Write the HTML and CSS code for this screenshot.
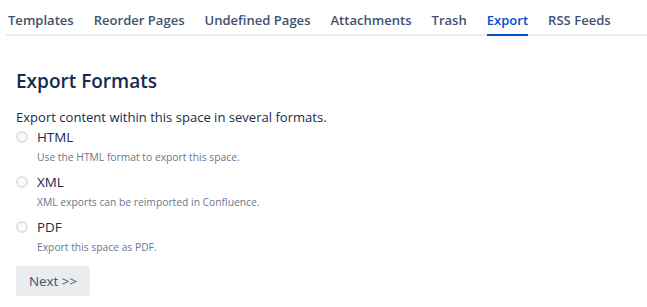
FILE: index.html
```html
<!DOCTYPE html>
<html>
<head>
<meta charset="utf-8">
<link rel="stylesheet" href="styles.css">
</head>
<body>
<nav class="tabs">
  <ul class="tab-list">
    <li class="tab">Templates</li>
    <li class="tab">Reorder Pages</li>
    <li class="tab">Undefined Pages</li>
    <li class="tab">Attachments</li>
    <li class="tab">Trash</li>
    <li class="tab active">Export</li>
    <li class="tab">RSS Feeds</li>
  </ul>
</nav>
<main class="content">
  <h1 class="title">Export Formats</h1>
  <p class="intro">Export content within this space in several formats.</p>
  <div class="options">
    <label class="option">
      <span class="radio"></span>
      <span class="option-name">HTML</span>
    </label>
    <div class="option-desc">Use the HTML format to export this space.</div>
    <label class="option">
      <span class="radio"></span>
      <span class="option-name">XML</span>
    </label>
    <div class="option-desc">XML exports can be reimported in Confluence.</div>
    <label class="option">
      <span class="radio"></span>
      <span class="option-name">PDF</span>
    </label>
    <div class="option-desc">Export this space as PDF.</div>
  </div>
  <button class="btn">Next &gt;&gt;</button>
</main>
</body>
</html>
```
FILE: styles.css
```css
* { box-sizing: border-box; }
body {
  margin: 0;
  font-family: "Open Sans", "Noto Sans", sans-serif;
  color: #172B4D;
  background: #fff;
}
.tabs {
  margin-left: 6px;
  padding-top: 10px;
  border-bottom: 2px solid #EBECF0;
}
.tab-list {
  list-style: none;
  margin: 0;
  padding: 0 0 0 2px;
  display: flex;
  gap: 20px;
}
.tab {
  font-size: 13.05px;
  line-height: 20px;
  font-weight: 600;
  color: #42526E;
  padding-bottom: 4px;
  margin-bottom: -2px;
  border-bottom: 2px solid transparent;
}
.tab.active {
  color: #0052CC;
  border-bottom-color: #0052CC;
}
.content {
  padding: 0 16px;
}
.title {
  margin: 31px 0 0;
  font-size: 19px;
  line-height: 28px;
  font-weight: 600;
  color: #172B4D;
}
.intro {
  margin: 12px 0 0;
  font-size: 13.05px;
  line-height: 20px;
}
.options {
  display: flex;
  flex-direction: column;
}
.option {
  display: flex;
  align-items: center;
  gap: 9px;
  height: 20px;
  font-size: 13.4px;
}
.radio {
  width: 12px;
  height: 12px;
  border-radius: 50%;
  border: 2px solid #DFE1E6;
  background: #FAFBFC;
}
.option-desc {
  font-size: 10.3px;
  line-height: 16px;
  color: #6B778C;
  margin: 2px 0 7px 21px;
}
.btn {
  margin-top: 4px;
  width: 74px;
  height: 30px;
  border: none;
  border-radius: 3px;
  background: #EBECF0;
  color: #42526E;
  font-family: inherit;
  font-size: 13.4px;
  padding: 0;
}
```
